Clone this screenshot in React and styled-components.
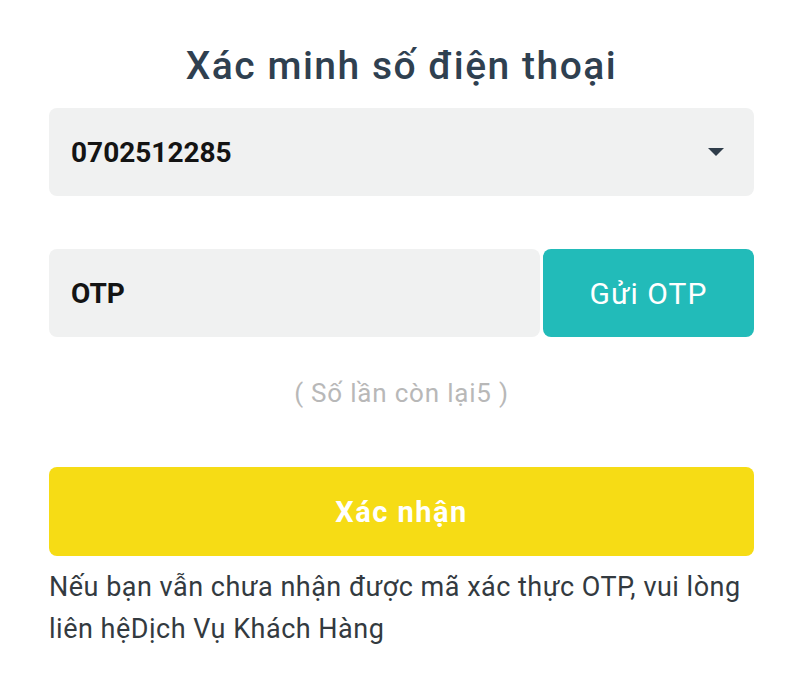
import React from "react";
import styled, { createGlobalStyle } from "styled-components";

const Global = createGlobalStyle`
  html, body { margin: 0; padding: 0; background: #fff; }
  body { font-family: Roboto, "Noto Sans", sans-serif; }
  * { box-sizing: border-box; }
`;

const Page = styled.div`
  width: 800px;
  padding: 43px 46px 0 49px;
  display: flex;
  flex-direction: column;
`;

const Title = styled.h1`
  margin: 0;
  font-size: 39px;
  line-height: 47px;
  font-weight: 500;
  letter-spacing: 1.5px;
  color: #2f4050;
  text-align: center;
`;

const Field = styled.div`
  height: 88px;
  background: #f0f1f1;
  border-radius: 8px;
  display: flex;
  align-items: center;
  padding: 0 22px;
  font-size: 28px;
  font-weight: 700;
  color: #141414;
  flex: ${(p) => (p.$grow ? 1 : "none")};
`;

const SelectField = styled(Field)`
  margin-top: 18px;
  justify-content: space-between;
  padding-right: 30px;
`;

const Caret = styled.span`
  width: 0;
  height: 0;
  border-left: 8px solid transparent;
  border-right: 8px solid transparent;
  border-top: 8px solid #2f3d4a;
`;

const OtpRow = styled.div`
  margin-top: 53px;
  display: flex;
  gap: 3px;
`;

const SendButton = styled.button`
  width: 211px;
  height: 88px;
  border: none;
  border-radius: 8px;
  background: #22bbb9;
  color: #fff;
  font-family: Roboto, sans-serif;
  font-size: 30px;
  letter-spacing: 1px;
  font-weight: 400;
  padding: 0;
`;

const Hint = styled.div`
  margin-top: 38px;
  text-align: center;
  font-size: 26px;
  letter-spacing: 0.8px;
  line-height: 36px;
  color: #b8b8b8;
`;

const ConfirmButton = styled.button`
  margin-top: 56px;
  height: 89px;
  border: none;
  border-radius: 8px;
  background: #f6dc15;
  color: #fff;
  font-family: Roboto, sans-serif;
  font-size: 29px;
  letter-spacing: 1.5px;
  font-weight: 700;
`;

const Note = styled.p`
  margin: 10px 0 0;
  font-size: 27px;
  letter-spacing: 0.5px;
  line-height: 42px;
  color: #333a40;
`;

export default function App() {
  return (
    <>
      <Global />
      <Page>
        <Title>Xác minh số điện thoại</Title>
        <SelectField>
          <span>0702512285</span>
          <Caret />
        </SelectField>
        <OtpRow>
          <Field $grow>OTP</Field>
          <SendButton>Gửi OTP</SendButton>
        </OtpRow>
        <Hint>( Số lần còn lại5 )</Hint>
        <ConfirmButton>Xác nhận</ConfirmButton>
        <Note>
          Nếu bạn vẫn chưa nhận được mã xác thực OTP, vui lòng liên hệDịch Vụ Khách Hàng
        </Note>
      </Page>
    </>
  );
}
